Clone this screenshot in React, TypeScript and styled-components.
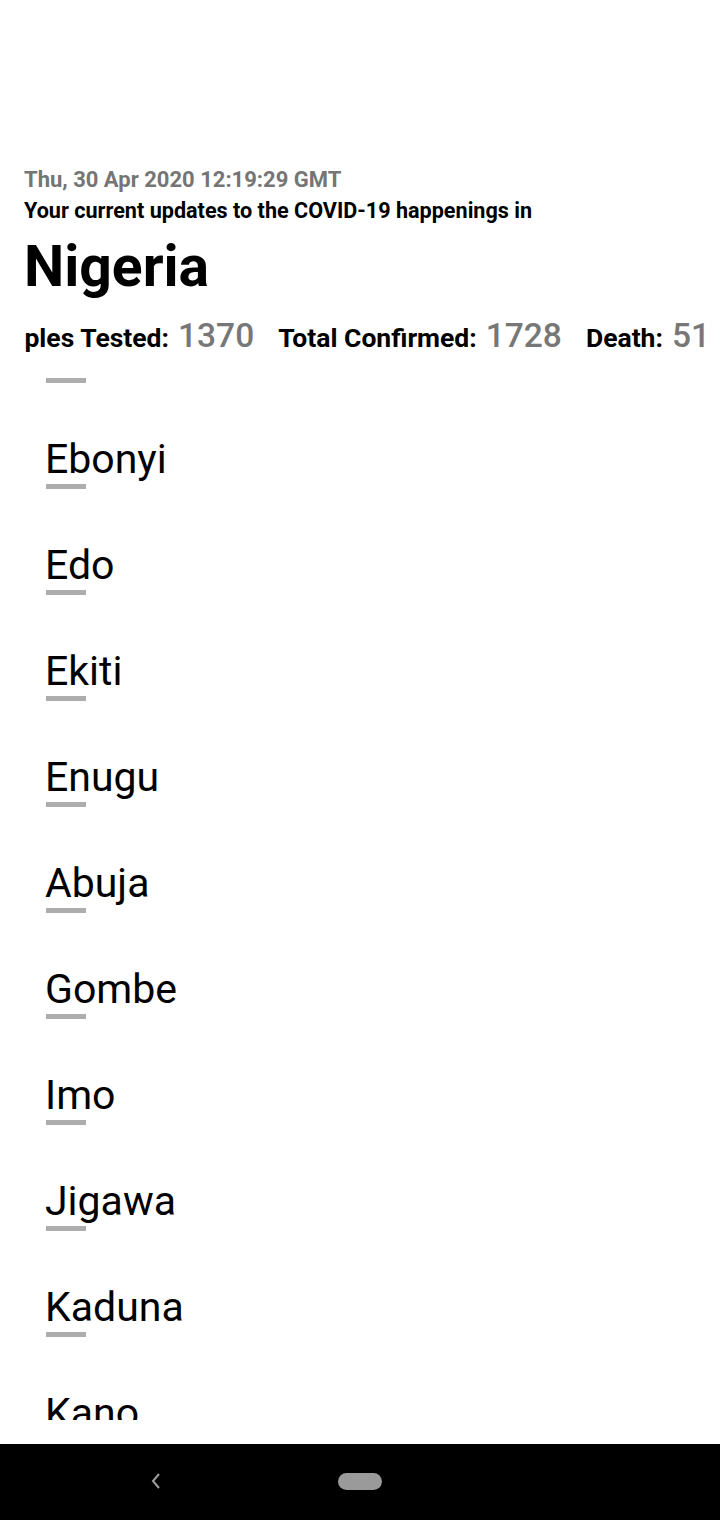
import React, { useLayoutEffect, useRef } from "react";
import styled, { createGlobalStyle } from "styled-components";

const GlobalStyle = createGlobalStyle`
  html, body {
    margin: 0;
    padding: 0;
    background: #ffffff;
  }
  body {
    font-family: Roboto, "Liberation Sans", sans-serif;
  }
  * { box-sizing: border-box; }
`;

const Screen = styled.div`
  width: 720px;
  height: 1520px;
  display: flex;
  flex-direction: column;
  background: #ffffff;
  overflow: hidden;
`;

const Content = styled.main`
  flex: 1;
  min-height: 0;
  display: flex;
  flex-direction: column;
  padding: 165px 0 24px 0;
`;

const Header = styled.header`
  display: flex;
  flex-direction: column;
  padding: 0 0 0 24px;
`;

const DateLine = styled.div`
  font-size: 22px;
  line-height: 30px;
  font-weight: 700;
  color: #757575;
`;

const Intro = styled.div`
  font-size: 21.6px;
  line-height: 31px;
  font-weight: 700;
  color: #000000;
`;

const Country = styled.h1`
  margin: 7px 0 0 0;
  font-size: 57px;
  line-height: 67px;
  font-weight: 700;
  color: #000000;
`;

const StatsScroller = styled.div`
  margin: 16px 0 0 24px;
  overflow-x: auto;
  overflow-y: hidden;
  scrollbar-width: none;
  &::-webkit-scrollbar { display: none; }
`;

const StatsRow = styled.div`
  display: inline-flex;
  align-items: baseline;
  white-space: nowrap;
  gap: 24px;
  padding-right: 24px;
`;

const Stat = styled.div`
  display: flex;
  align-items: baseline;
  gap: 9px;
`;

const StatLabel = styled.span`
  font-size: 26.5px;
  line-height: 40px;
  font-weight: 700;
  color: #000000;
`;

const StatValue = styled.span`
  font-size: 33.5px;
  line-height: 40px;
  font-weight: 500;
  color: #777777;
`;

const ListScroller = styled.div`
  flex: 1;
  min-height: 0;
  margin-top: 12px;
  overflow-y: auto;
  scrollbar-width: none;
  &::-webkit-scrollbar { display: none; }
`;

const StateList = styled.ul`
  list-style: none;
  margin: 0;
  padding: 0 0 0 45px;
`;

const StateItem = styled.li`
  display: flex;
  flex-direction: column;
  align-items: flex-start;
  margin-bottom: 53px;
`;

const StateName = styled.span`
  font-size: 41px;
  line-height: 47px;
  font-weight: 400;
  color: #000000;
`;

const Underline = styled.span`
  display: block;
  width: 40px;
  height: 5px;
  margin: 1px 0 0 1px;
  background: #adadad;
`;

const NavBar = styled.nav`
  height: 76px;
  flex-shrink: 0;
  background: #000000;
  display: flex;
  align-items: center;
  padding-bottom: 2px;
`;

const BackButton = styled.div`
  width: 20px;
  height: 20px;
  margin-left: 146px;
  display: flex;
  align-items: center;
  justify-content: center;
`;

const HomePill = styled.div`
  width: 44px;
  height: 17px;
  margin-left: 172px;
  border-radius: 9px;
  background: #9a9a9a;
`;

const STATES = [
  "Abia", "Adamawa", "Akwa Ibom", "Anambra", "Bauchi", "Bayelsa", "Benue",
  "Borno", "Cross River", "Delta", "Ebonyi", "Edo", "Ekiti", "Enugu", "Abuja",
  "Gombe", "Imo", "Jigawa", "Kaduna", "Kano", "Katsina", "Kebbi", "Kogi",
  "Kwara", "Lagos", "Nasarawa", "Niger", "Ogun", "Ondo", "Osun", "Oyo",
  "Plateau", "Rivers", "Sokoto", "Taraba", "Yobe", "Zamfara",
];

export default function App() {
  const statsRef = useRef<HTMLDivElement>(null);
  const plesRef = useRef<HTMLSpanElement>(null);
  const listRef = useRef<HTMLDivElement>(null);
  const anchorRef = useRef<HTMLLIElement>(null);

  useLayoutEffect(() => {
    if (statsRef.current && plesRef.current) {
      const d =
        plesRef.current.getBoundingClientRect().left -
        statsRef.current.getBoundingClientRect().left;
      statsRef.current.scrollLeft += d;
    }
    if (listRef.current && anchorRef.current) {
      const delta = anchorRef.current.getBoundingClientRect().top - 436;
      listRef.current.scrollTop += delta;
    }
  }, []);

  return (
    <>
      <GlobalStyle />
      <Screen>
        <Content>
          <Header>
            <DateLine>Thu, 30 Apr 2020 12:19:29 GMT</DateLine>
            <Intro>Your current updates to the COVID-19 happenings in</Intro>
            <Country>Nigeria</Country>
          </Header>
          <StatsScroller ref={statsRef}>
            <StatsRow>
              <Stat>
                <StatLabel>
                  Sam<span ref={plesRef}>ples</span> Tested:
                </StatLabel>
                <StatValue>1370</StatValue>
              </Stat>
              <Stat>
                <StatLabel>Total Confirmed:</StatLabel>
                <StatValue>1728</StatValue>
              </Stat>
              <Stat>
                <StatLabel>Death:</StatLabel>
                <StatValue>51</StatValue>
              </Stat>
            </StatsRow>
          </StatsScroller>
          <ListScroller ref={listRef}>
            <StateList>
              {STATES.map((s) => (
                <StateItem key={s} ref={s === "Ebonyi" ? anchorRef : undefined}>
                  <StateName>{s}</StateName>
                  <Underline />
                </StateItem>
              ))}
            </StateList>
          </ListScroller>
        </Content>
        <NavBar>
          <BackButton>
            <svg width="12" height="18" viewBox="0 0 12 18">
              <path d="M9 2 L3 9 L9 16" fill="none" stroke="#9e9e9e" strokeWidth="2" />
            </svg>
          </BackButton>
          <HomePill />
        </NavBar>
      </Screen>
    </>
  );
}
